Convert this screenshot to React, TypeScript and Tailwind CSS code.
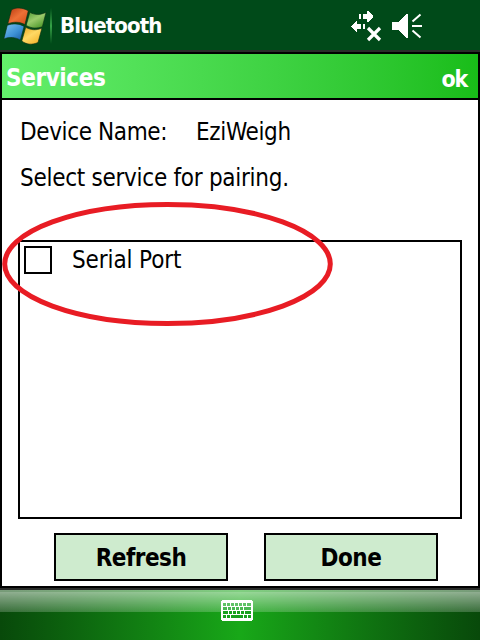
import type { ReactNode } from "react";

function WindowsLogo() {
  return (
    <svg width="48" height="50" viewBox="0 0 48 50" className="shrink-0">
      <defs>
        <linearGradient id="red" x1="0" y1="0" x2="1" y2="1">
          <stop offset="0" stopColor="#b83a10" />
          <stop offset="0.5" stopColor="#ee7137" />
          <stop offset="1" stopColor="#d24a15" />
        </linearGradient>
        <linearGradient id="green" x1="0" y1="0" x2="0.7" y2="1">
          <stop offset="0" stopColor="#4f9c35" />
          <stop offset="0.5" stopColor="#9bcb6b" />
          <stop offset="1" stopColor="#4f9a2c" />
        </linearGradient>
        <linearGradient id="blue" x1="0" y1="0" x2="1" y2="1">
          <stop offset="0" stopColor="#7cc3ef" />
          <stop offset="0.55" stopColor="#3e92d6" />
          <stop offset="1" stopColor="#1458a0" />
        </linearGradient>
        <linearGradient id="yellow" x1="0" y1="0" x2="0.8" y2="1">
          <stop offset="0" stopColor="#e9a51e" />
          <stop offset="0.5" stopColor="#ffd964" />
          <stop offset="1" stopColor="#f4b32b" />
        </linearGradient>
      </defs>
      <g stroke="#0a2d12" strokeWidth="0.6">
        <path d="M11.5 9.8C16 7.3 22 7.3 28.3 10.8L24.9 24.6C19.5 21.6 13.5 21.6 7.8 23.8Z" fill="url(#red)" />
        <path d="M29.8 12.3C35 15.2 40 15 46 12.4L42.4 26.7C37 28.8 31.5 28.5 26.2 25.4Z" fill="url(#green)" />
        <path d="M7.3 25.3C13 23.2 19 23.4 24.1 26.4L20.4 40.2C15 36.9 9.5 36.8 3.8 38.9Z" fill="url(#blue)" />
        <path d="M25.7 27.3C31 30.3 36.5 30.4 41.9 28.3L38 42.5C32 45.2 26.5 44.6 21.8 41Z" fill="url(#yellow)" />
      </g>
    </svg>
  );
}

function ConnectionIcon() {
  return (
    <svg width="32" height="32" viewBox="350 10 32 32" fill="#fff" shapeRendering="crispEdges">
      <path d="M359 14h2v5h-2zM363 14h4v-3h1l5 5v1l-5 5h-1v-3h-4z" />
      <path d="M351 26l5-5h1v3h4v5h-4v3h-1l-5-5zM363 24h2v5h-2z" />
      <path d="M368 28L380 40M380 28L368 40" stroke="#fff" strokeWidth="3.2" shapeRendering="auto" />
    </svg>
  );
}

function SpeakerIcon() {
  return (
    <svg width="32" height="32" viewBox="391 10 32 32" fill="#fff">
      <path d="M392 22h6l9-8h1v24h-1l-9-8h-6z" shapeRendering="crispEdges" />
      <path d="M412.5 21.5l8-7M412 26h10M412.5 30.5l8 7" stroke="#fff" strokeWidth="2" />
    </svg>
  );
}

// each row lists [x, width] of its keys
const keyRows = [
  [[2, 3], [6, 3], [10, 3], [14, 3], [18, 3], [22, 3], [26, 4]],
  [[2, 4], [7, 3], [11, 3], [15, 3], [19, 3], [23, 7]],
  [[2, 5], [8, 3], [12, 3], [16, 3], [20, 3], [24, 6]],
  [[2, 3], [6, 3], [10, 12], [23, 3], [27, 3]],
];
const rowFills = ["#5fc266", "#4ab852", "#18a01d", "#18a01d"];

function KeyboardIcon() {
  return (
    <svg width="32" height="21" viewBox="0 0 32 21" shapeRendering="crispEdges">
      <path d="M1 0h30v1h1v19h-1v1H1v-1H0V1h1z" fill="#fff" />
      {keyRows.map((row, y) =>
        row.map(([x, w]) => (
          <rect key={`${y}-${x}`} x={x} y={3 + y * 4} width={w} height="3" fill={rowFills[y]} />
        ))
      )}
    </svg>
  );
}

function SoftButton({ children }: { children: ReactNode }) {
  return (
    <button className="h-12 w-[174px] border-2 border-black bg-[#ceebce] pt-px text-2xl leading-none font-bold tracking-[-0.5px]">
      {children}
    </button>
  );
}

export default function App() {
  return (
    <div className="relative flex h-[640px] w-[480px] flex-col overflow-hidden bg-white font-['DejaVu_Sans_Condensed','DejaVu_Sans',sans-serif] whitespace-nowrap text-black">
      {/* Title bar */}
      <header className="flex h-[52px] shrink-0 border-b-2 border-[#292c29] bg-[#004a19] text-white">
        <WindowsLogo />
        <div className="mt-2 ml-[2px] h-9 w-[2px] bg-gradient-to-b from-[#004a19] via-[#35a347] to-[#004a19]" />
        <h1 className="mt-[13px] ml-[8px] w-[282px] text-[22px] leading-[26px] font-bold tracking-[-0.9px]">Bluetooth</h1>
        <div className="flex gap-[9px] pt-[10px] pl-[8px]">
          <ConnectionIcon />
          <SpeakerIcon />
        </div>
      </header>

      {/* Window */}
      <main className="flex h-[536px] shrink-0 flex-col border-2 border-black">
        <div className="flex h-[46px] shrink-0 items-center justify-between border-b-2 border-black bg-gradient-to-r from-[#63ef6b] to-[#18bd18] pr-[11px] pl-1 text-2xl leading-none font-bold text-white">
          <h2 className="pt-[3px] tracking-[-0.4px]">Services</h2>
          <button className="pt-[6px] text-[23px] leading-none tracking-[-1.2px]">ok</button>
        </div>

        <div className="flex flex-col px-4 pt-[18px] text-2xl leading-7">
          <div className="flex pl-[2px]">
            <span className="w-[176px] tracking-[-0.38px]">Device Name:</span>
            <span className="tracking-[-0.35px]">EziWeigh</span>
          </div>
          <p className="mt-[18px] pl-[2px] tracking-[-0.28px]">Select service for pairing.</p>

          <div className="mt-[48px] h-[279px] border-2 border-black p-1">
            <div className="flex">
              <span className="h-7 w-7 border-2 border-black" />
              <span className="ml-5 tracking-[-0.12px]">Serial Port</span>
            </div>
          </div>

          <div className="mt-[14px] flex gap-9 pl-9">
            <SoftButton>Refresh</SoftButton>
            <SoftButton>Done</SoftButton>
          </div>
        </div>
      </main>

      {/* Soft key bar */}
      <footer className="h-[52px] shrink-0 border-t-2 border-[#292c29] bg-gradient-to-r from-[#08490a] via-[#18a818] to-[#08490a]">
        <div className="h-[22px] border-t-2 border-white/30 bg-gradient-to-b from-white/55 to-white/20">
          <div className="flex justify-center pt-[8px] pr-[6px]">
            <KeyboardIcon />
          </div>
        </div>
      </footer>

      {/* Highlight around the service entry */}
      <svg className="pointer-events-none absolute top-[200px] left-0" width="340" height="130">
        <ellipse cx="167.5" cy="64" rx="162.8" ry="59.5" fill="none" stroke="#e81c24" strokeWidth="5" />
      </svg>
    </div>
  );
}
